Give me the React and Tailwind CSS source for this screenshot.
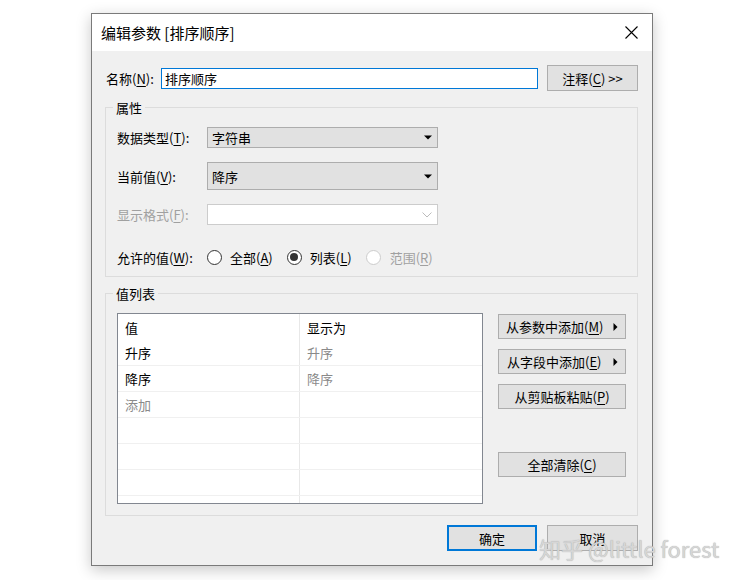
import React from "react";

function Mn({ children }) {
  return <span className="underline decoration-1 underline-offset-[2px]">{children}</span>;
}
function L({ pre, k, post = "" }) {
  return (
    <>
      {pre}(<Mn>{k}</Mn>){post}
    </>
  );
}

function DropArrow() {
  return (
    <svg width="8" height="5" viewBox="0 0 8 5" className="shrink-0">
      <path d="M0 0.5h8L4 4.5z" fill="#000" />
    </svg>
  );
}
function RightArrow() {
  return (
    <svg width="5" height="8" viewBox="0 0 5 8" className="shrink-0">
      <path d="M0.5 0L4.5 4L0.5 8z" fill="#000" />
    </svg>
  );
}

function Radio({ checked, disabled }) {
  return (
    <span
      className={
        "w-[15px] h-[15px] rounded-full border bg-white flex items-center justify-center shrink-0 " +
        (disabled ? "border-[#cccccc]" : "border-[#333333]")
      }
    >
      {checked && <span className="w-[8px] h-[8px] rounded-full bg-[#333333]" />}
    </span>
  );
}

function Btn({ children, className = "" }) {
  return (
    <div
      className={
        "bg-[#e1e1e1] border border-[#adadad] flex items-center text-[13px] leading-none " + className
      }
    >
      {children}
    </div>
  );
}

export default function App() {
  const rows = [
    ["升序", "升序", false],
    ["降序", "降序", false],
    ["添加", "", true],
    ["", "", false],
    ["", "", false],
    ["", "", false],
    ["", "", false],
  ];
  return (
    <div className="w-[741px] h-[580px] bg-white relative pt-[13px] pl-[91px] font-['Microsoft_YaHei','Noto_Sans_CJK_SC',sans-serif] text-black">
      <div className="w-[562px] h-[553px] border border-[#7a7a7a] bg-[#f0f0f0] flex flex-col shadow-[0_4px_14px_rgba(0,0,0,0.22)]">
        {/* title bar */}
        <div className="h-[37px] bg-white flex items-center justify-between pl-[9px] pr-[14px] shrink-0">
          <span className="text-[15px] leading-none">编辑参数 [排序顺序]</span>
          <svg width="13" height="13" viewBox="0 0 13 13">
            <path d="M0.5 0.5L12.5 12.5M12.5 0.5L0.5 12.5" stroke="#000" strokeWidth="1.1" />
          </svg>
        </div>

        <div className="flex flex-col pl-[13px] pr-[14px]">
          {/* name row */}
          <div className="mt-[14px] h-[26px] flex items-center text-[13px] leading-none">
            <span className="w-[56px] pl-[1px]">
              <L pre="名称" k="N" post=":" />
            </span>
            <div className="w-[377px] h-[21px] bg-white border border-[#0078d7] flex items-center pl-[3px]">
              排序顺序
            </div>
            <Btn className="ml-[9px] w-[91px] h-[26px] justify-center">
              注释(<Mn>C</Mn>) &gt;&gt;
            </Btn>
          </div>

          {/* group 属性 */}
          <div className="relative mt-[16px] h-[170px] border border-[#dcdcdc] pt-[19px] pl-[11px] flex flex-col text-[13px] leading-none">
            <span className="absolute -top-[9px] left-[7px] px-[3px] bg-[#f0f0f0] leading-[18px]">属性</span>
            <div className="h-[21px] flex items-center">
              <span className="w-[90px]">
                <L pre="数据类型" k="T" post=":" />
              </span>
              <div className="w-[231px] h-[21px] bg-[#e1e1e1] border border-[#adadad] flex items-center justify-between pl-[4px] pr-[5px]">
                <span>字符串</span>
                <DropArrow />
              </div>
            </div>
            <div className="mt-[14px] h-[28px] flex items-center">
              <span className="w-[90px]">
                <L pre="当前值" k="V" post=":" />
              </span>
              <div className="w-[231px] h-[28px] bg-[#e1e1e1] border border-[#adadad] flex items-center justify-between pl-[4px] pr-[5px]">
                <span>降序</span>
                <DropArrow />
              </div>
            </div>
            <div className="mt-[14px] h-[21px] flex items-center">
              <span className="w-[90px] text-[#a0a0a0]">
                <L pre="显示格式" k="F" post=":" />
              </span>
              <div className="w-[231px] h-[21px] bg-white border border-[#cccccc] flex items-center justify-end pr-[5px]">
                <svg width="10" height="6" viewBox="0 0 10 6">
                  <path d="M0.5 0.5L5 5L9.5 0.5" stroke="#bcbcbc" fill="none" strokeWidth="1" />
                </svg>
              </div>
            </div>
            <div className="mt-[22px] h-[20px] flex items-center">
              <span className="w-[90px]">
                <L pre="允许的值" k="W" post=":" />
              </span>
              <Radio />
              <span className="ml-[8px]">
                <L pre="全部" k="A" />
              </span>
              <span className="ml-[14px]">
                <Radio checked />
              </span>
              <span className="ml-[8px]">
                <L pre="列表" k="L" />
              </span>
              <span className="ml-[14px]">
                <Radio disabled />
              </span>
              <span className="ml-[9px] text-[#a0a0a0]">
                <L pre="范围" k="R" />
              </span>
            </div>
          </div>

          {/* group 值列表 */}
          <div className="relative mt-[16px] h-[223px] border border-[#dcdcdc] pt-[19px] pl-[11px] flex text-[13px] leading-none">
            <span className="absolute -top-[9px] left-[7px] px-[3px] bg-[#f0f0f0] leading-[18px]">值列表</span>
            <div className="w-[366px] h-[191px] bg-white border border-[#828790] overflow-hidden flex flex-col">
              <div className="h-[26px] flex shrink-0">
                <div className="w-[182px] border-r border-[#e8e8e8] pl-[7px] flex items-center">值</div>
                <div className="flex-1 pl-[7px] flex items-center">显示为</div>
              </div>
              {rows.map((r, i) => (
                <div key={i} className="h-[26px] flex shrink-0 border-b border-[#f0f0f0]">
                  <div
                    className={
                      "w-[182px] border-r border-[#e8e8e8] pl-[7px] flex items-center " +
                      (r[2] ? "text-[#8a8a8a]" : "")
                    }
                  >
                    {r[0]}
                  </div>
                  <div className="flex-1 pl-[7px] flex items-center text-[#8a8a8a]">{r[1]}</div>
                </div>
              ))}
            </div>
            <div className="ml-[15px] w-[128px] pt-[1px] flex flex-col">
              <Btn className="h-[25px] justify-between pl-[7px] pr-[7px]">
                <span>
                  <L pre="从参数中添加" k="M" />
                </span>
                <RightArrow />
              </Btn>
              <Btn className="mt-[10px] h-[25px] justify-between pl-[8px] pr-[7px]">
                <span>
                  <L pre="从字段中添加" k="E" />
                </span>
                <RightArrow />
              </Btn>
              <Btn className="mt-[10px] h-[25px] justify-center">
                <L pre="从剪贴板粘贴" k="P" />
              </Btn>
              <Btn className="mt-[43px] h-[25px] justify-center">
                <L pre="全部清除" k="C" />
              </Btn>
            </div>
          </div>

          {/* bottom buttons */}
          <div className="mt-[9px] flex justify-end gap-[10px]">
            <div className="w-[90px] h-[26px] bg-[#e1e1e1] border-2 border-[#0078d7] flex items-center justify-center text-[13px] leading-none">
              确定
            </div>
            <Btn className="w-[91px] h-[26px] justify-center">取消</Btn>
          </div>
        </div>
      </div>

      <span className="absolute left-[539px] top-[534px] text-[22px] leading-[28px] text-[#d6d6d6] [text-shadow:0_0_1px_#a0a0a0] whitespace-nowrap">
        知乎 @little forest
      </span>
    </div>
  );
}
